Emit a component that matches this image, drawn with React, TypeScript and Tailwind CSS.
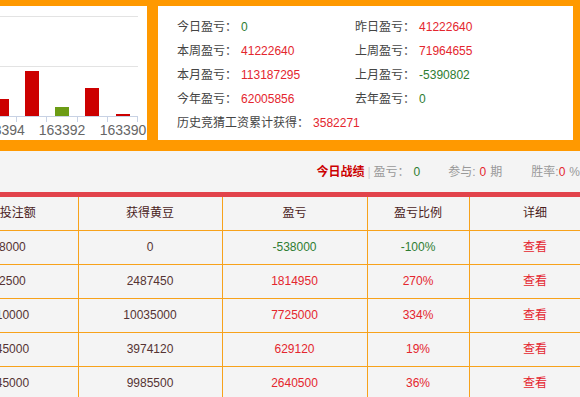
const font = { fontFamily: '"Liberation Sans", "Noto Sans CJK SC", sans-serif' };

interface Row {
  bet: string;
  won: string;
  profit: string;
  ratio: string;
  loss?: boolean;
}

const rows: Row[] = [
  { bet: '538000', won: '0', profit: '-538000', ratio: '-100%', loss: true },
  { bet: '672500', won: '2487450', profit: '1814950', ratio: '270%' },
  { bet: '2310000', won: '10035000', profit: '7725000', ratio: '334%' },
  { bet: '3345000', won: '3974120', profit: '629120', ratio: '19%' },
  { bet: '7345000', won: '9985500', profit: '2640500', ratio: '36%' },
];

const bars = [
  { x: -5, top: 93, color: '#cc0000' },
  { x: 25, top: 65, color: '#cc0000' },
  { x: 55, top: 101, color: '#6c9c15' },
  { x: 85, top: 82, color: '#cc0000' },
  { x: 116, top: 108, color: '#cc0000' },
];

const Chart = () => (
  <svg width="147" height="134" viewBox="0 0 147 134">
    <line x1="0" y1="10.5" x2="138" y2="10.5" stroke="#e3e3e3" />
    <line x1="0" y1="60.5" x2="138" y2="60.5" stroke="#e3e3e3" />
    {bars.map((b, i) => (
      <rect key={i} x={b.x} y={b.top} width="14" height={110 - b.top} fill={b.color} />
    ))}
    <line x1="0" y1="110.5" x2="138" y2="110.5" stroke="#c8d2e4" />
    {[16.5, 46.5, 77.5, 107.5, 137.5].map((x) => (
      <line key={x} x1={x} y1="110" x2={x} y2="116" stroke="#c8d2e4" />
    ))}
    {[
      { x: 1.5, t: '163394' },
      { x: 62, t: '163392' },
      { x: 123, t: '163390' },
    ].map((l) => (
      <text key={l.t} x={l.x} y="129" textAnchor="middle" fontSize="14" fill="#666" style={font}>
        {l.t}
      </text>
    ))}
  </svg>
);

const Stat = ({ label, value, green }: { label: string; value: string; green?: boolean }) => (
  <div className="h-[24px] leading-[24px] whitespace-nowrap">
    <span className="text-[#444]">{label}：</span>
    <span className={`ml-[4px] ${green ? 'text-[#2e7d32]' : 'text-[#e4262e]'}`}>{value}</span>
  </div>
);

const App = () => {
  return (
    <div className="w-[580px] h-[397px] overflow-hidden bg-[#f4f4f4] text-[12px]" style={font}>
      <div className="flex gap-[11px] bg-[#ff9900] pt-[6px] pb-[11px] pr-[7px]">
        <div className="w-[147px] h-[134px] bg-white overflow-hidden">
          <Chart />
        </div>
        <div className="flex-1 bg-white pt-[9px] pl-[19px] grid grid-cols-[178px_1fr] content-start">
          <Stat label="今日盈亏" value="0" green />
          <Stat label="昨日盈亏" value="41222640" />
          <Stat label="本周盈亏" value="41222640" />
          <Stat label="上周盈亏" value="71964655" />
          <Stat label="本月盈亏" value="113187295" />
          <Stat label="上月盈亏" value="-5390802" green />
          <Stat label="今年盈亏" value="62005856" />
          <Stat label="去年盈亏" value="0" green />
          <div className="col-span-2">
            <Stat label="历史竞猜工资累计获得" value="3582271" />
          </div>
        </div>
      </div>

      <div className="h-[41px] flex items-center justify-end whitespace-nowrap text-[#999]">
        <span className="font-bold text-[#cc0000]">今日战绩</span>
        <span className="mx-[3px] text-[#ccc]">|</span>
        <span>盈亏：</span>
        <span className="ml-[4px] text-[#2e7d32]">0</span>
        <span className="ml-[28px]">参与:</span>
        <span className="ml-[4px] text-[#e4262e]">0</span>
        <span className="ml-[4px]">期</span>
        <span className="ml-[29px]">胜率:</span>
        <span className="text-[#e4262e]">0</span>
        <span className="ml-[4px]">%</span>
      </div>
      <div className="h-[5px] bg-[#e2434b]" />

      <table className="ml-[-66px] border-collapse table-fixed w-[667px] text-center">
        <colgroup>
          <col className="w-[144px]" />
          <col className="w-[144px]" />
          <col className="w-[145px]" />
          <col className="w-[102px]" />
          <col className="w-[132px]" />
        </colgroup>
        <thead>
          <tr className="h-[33px] text-[#4a1c1c]">
            {['总计投注额', '获得黄豆', '盈亏', '盈亏比例', '详细'].map((h) => (
              <th key={h} className="font-normal border-r border-b border-[#f7a21b]">
                {h}
              </th>
            ))}
          </tr>
        </thead>
        <tbody>
          {rows.map((r) => {
            const c = r.loss ? 'text-[#2e7d32]' : 'text-[#e4262e]';
            return (
              <tr key={r.bet} className="h-[34px]">
                <td className="border-r border-b border-[#f7a21b] text-[#553333]">{r.bet}</td>
                <td className="border-r border-b border-[#f7a21b] text-[#553333]">{r.won}</td>
                <td className={`border-r border-b border-[#f7a21b] ${c}`}>{r.profit}</td>
                <td className={`border-r border-b border-[#f7a21b] ${c}`}>{r.ratio}</td>
                <td className="border-r border-b border-[#f7a21b] text-[#e4252f]">查看</td>
              </tr>
            );
          })}
        </tbody>
      </table>
    </div>
  );
};

export default App;
